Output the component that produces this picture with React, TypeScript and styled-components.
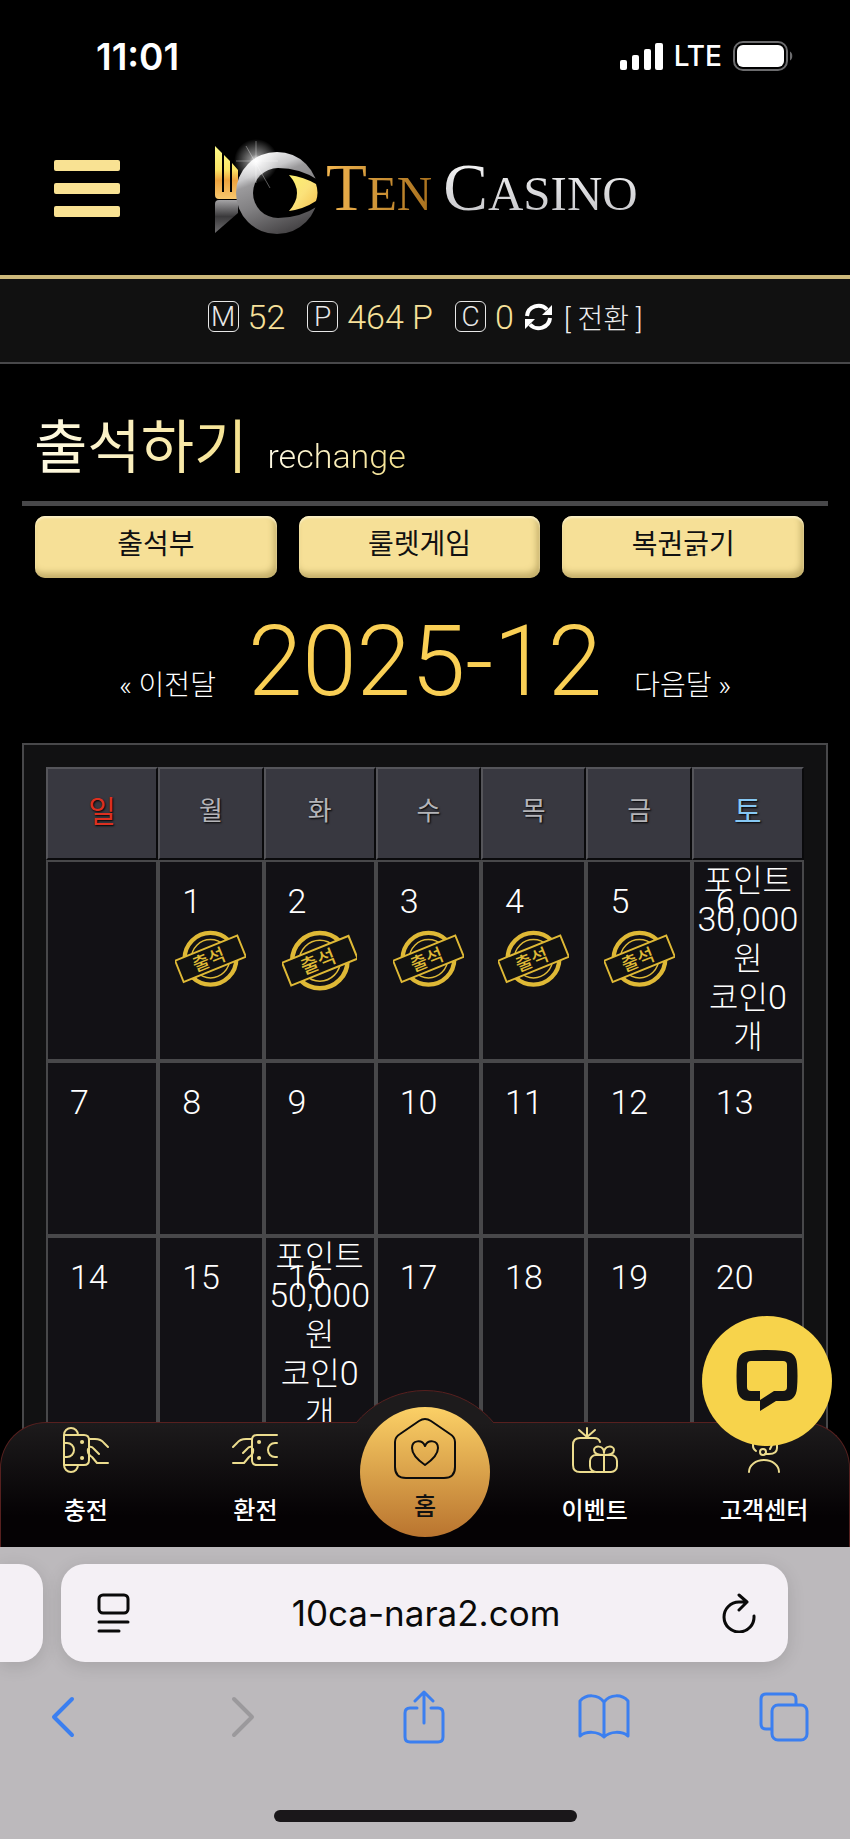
import React from "react";
import styled, { createGlobalStyle, css } from "styled-components";

const GlobalStyle = createGlobalStyle`
  * { box-sizing: border-box; }
  html, body { margin: 0; background: #000; }
  body { font-family: Roboto, "Noto Sans CJK KR", sans-serif; color: #fff; }
  button { font: inherit; color: inherit; border: 0; padding: 0; background: none; cursor: pointer; }
  a { color: inherit; text-decoration: none; }
  svg { display: block; }
`;

const Screen = styled.div`
  display: flex;
  flex-direction: column;
  min-height: 100vh;
  overflow: hidden;
`;

/* ---------- status bar ---------- */

const StatusBar = styled.div`
  display: flex;
  align-items: center;
  justify-content: space-between;
  height: 112px;
  padding: 0 57px 0 96px;
  font-family: Inter, sans-serif;
`;

const Clock = styled.time`
  font-size: 37px;
  font-weight: 600;
`;

const StatusIcons = styled.div`
  display: flex;
  align-items: center;
  gap: 11px;
  font-size: 28px;
  font-weight: 500;
`;

/* ---------- site header ---------- */

const WebView = styled.div`
  position: relative;
  flex: 1;
  display: flex;
  flex-direction: column;
`;

const Header = styled.header`
  display: flex;
  align-items: center;
  height: 167px;
  padding: 0 54px 10px;
  border-bottom: 4px solid #cdb87a;
`;

const MenuButton = styled.button`
  display: flex;
  flex-direction: column;
  gap: 12px;
  width: 66px;
`;

const MenuBar = styled.span`
  height: 11px;
  border-radius: 2px;
  background: #f9e293;
`;

const Logo = styled.a`
  display: flex;
  align-items: center;
  margin-left: 94px;
`;

const LogoText = styled.span`
  display: flex;
  align-items: baseline;
  gap: 11px;
  margin-left: 8px;
  padding-top: 4px;
  font-family: "Liberation Serif", serif;
  font-size: 49px;
  line-height: 72px;
`;

const LogoWord = styled.span<{ $fill: string }>`
  color: transparent;
  background: ${(p) => p.$fill};
  background-clip: text;
`;

const BigLetter = styled.span`
  font-size: 67px;
`;

const Balance = styled.div`
  display: flex;
  align-items: center;
  justify-content: center;
  height: 85px;
  padding-bottom: 8px;
  background: #111;
  border-bottom: 2px solid #48484a;
  font-size: 34px;
  font-weight: 300;
  color: #f7e19a;
`;

const Badge = styled.span`
  display: grid;
  place-items: center;
  width: 31px;
  height: 31px;
  margin-right: 9px;
  border: 1px solid #e8e8e8;
  border-radius: 6px;
  color: #e8e8e8;
  font-size: 28px;
  line-height: 29px;
`;

const Amount = styled.span`
  margin-right: 22px;
`;

const Convert = styled.button`
  display: flex;
  align-items: center;
  gap: 11px;
  margin-left: -12px;
  color: #eee;
  font-size: 28px;
  font-weight: 300;
`;

/* ---------- page body ---------- */

const Main = styled.main`
  padding: 40px 22px 0;
`;

const TitleRow = styled.div`
  display: flex;
  align-items: baseline;
  gap: 20px;
  height: 102px;
  padding: 0 12px;
  border-bottom: 5px solid #48484a;
`;

const goldText = css`
  color: transparent;
  background: linear-gradient(90deg, #fffbe6, #f5e18c);
  background-clip: text;
`;

const Title = styled.h1`
  margin: 0;
  font-size: 58px;
  font-weight: 400;
  line-height: 88px;
  ${goldText}
`;

const Subtitle = styled.span`
  font-size: 34px;
  font-weight: 300;
  ${goldText}
`;

const Tabs = styled.div`
  display: grid;
  grid-template-columns: repeat(3, 1fr);
  gap: 22px;
  padding: 10px 24px 0 13px;
`;

const Tab = styled.button`
  height: 62px;
  padding-bottom: 10px;
  border-radius: 10px;
  background: #f6e097;
  box-shadow: inset 0 2px 2px #fbf0c6, inset -3px -5px 6px rgba(120, 100, 40, 0.4);
  color: #111;
  font-size: 28px;
`;

const MonthNav = styled.nav`
  display: flex;
  align-items: baseline;
  justify-content: center;
  gap: 32px;
  height: 165px;
  font-size: 28px;
  font-weight: 300;
`;

const Month = styled.h2`
  margin: 0;
  color: #f9cf55;
  font-size: 98px;
  font-weight: 300;
  line-height: 168px;
`;

const Panel = styled.section`
  padding: 22px;
  border: 2px solid #48484a;
  background: #111112;
`;

const Calendar = styled.table`
  width: 100%;
  table-layout: fixed;
  border-collapse: separate;
  border-spacing: 0;
`;

type Tone = "sun" | "sat" | "week";
const toneColor: Record<Tone, string> = { sun: "#dc3020", sat: "#86c8f4", week: "#b4b4b8" };

const DayHead = styled.th<{ $tone: Tone; $wide: boolean }>`
  width: ${(p) => (p.$wide ? "14.8%" : "13.9%")};
  height: 93px;
  padding: 0 0 10px;
  border: 2px solid #0a0a0c;
  border-top-color: #55555a;
  border-left-color: #55555a;
  background: #383840;
  color: ${(p) => toneColor[p.$tone]};
  font-size: ${(p) => (p.$tone === "week" ? 26 : 30)}px;
  font-weight: 400;
  text-shadow: 1px 1px 2px #000;
`;

const DayCell = styled.td<{ $tall: boolean }>`
  position: relative;
  height: ${(p) => (p.$tall ? 201 : 175)}px;
  padding: 0;
  border: 2px solid #48484a;
  background: #121115;
  font-size: 32px;
  font-weight: 300;
  line-height: 39px;
  text-align: center;
  vertical-align: top;
`;

const DayNumber = styled.span`
  position: absolute;
  top: 20px;
  left: 22px;
  font-size: 34px;
`;

const Stamp = styled.svg`
  width: 70%;
  margin: 68px auto 0;
`;

const RewardNumber = styled.span`
  font-size: 34px;
  line-height: 34px;
`;

/* ---------- bottom tab bar ---------- */

const TabBar = styled.nav`
  position: absolute;
  inset: auto 0 0;
  display: grid;
  grid-template-columns: repeat(5, 1fr);
  height: 125px;
  border: 1px solid #57201f;
  border-bottom: 0;
  border-radius: 46px 46px 0 0;
  background: linear-gradient(#1d1b1c, #050204 75%);
`;

const Bump = styled.span`
  position: absolute;
  top: -33px;
  left: calc(50% - 90px);
  width: 180px;
  height: 180px;
  border: 1px solid #57201f;
  border-radius: 50%;
  background: #1d1b1c;
  clip-path: inset(0 0 147px);
`;

const TabLink = styled.a`
  display: flex;
  flex-direction: column;
  align-items: center;
  gap: 20px;
  padding-top: 4px;
  font-size: 24px;
  font-weight: 500;
  line-height: 36px;
  color: #fff;
`;

const HomeLink = styled.a`
  position: absolute;
  top: -16px;
  left: calc(50% - 65px);
  display: flex;
  flex-direction: column;
  align-items: center;
  gap: 12px;
  width: 130px;
  height: 130px;
  padding-top: 10px;
  border-radius: 50%;
  background: linear-gradient(#fbd066, #b9742f);
  color: #111;
  font-size: 24px;
  font-weight: 500;
  line-height: 32px;
`;

const ChatButton = styled.button`
  position: absolute;
  right: 18px;
  bottom: 101px;
  display: grid;
  place-items: center;
  width: 130px;
  height: 130px;
  border-radius: 50%;
  background: #f7d34b;
`;

/* ---------- browser chrome ---------- */

const Browser = styled.footer`
  height: 292px;
  padding-top: 17px;
  background: #bcb9bc;
`;

const AddressRow = styled.div`
  display: flex;
  gap: 18px;
  padding-right: 62px;
`;

const NextTab = styled.div`
  width: 43px;
  height: 98px;
  border-radius: 0 24px 24px 0;
  background: #f4f0f5;
  box-shadow: 0 4px 18px rgba(0, 0, 0, 0.12);
`;

const Address = styled.div`
  flex: 1;
  display: flex;
  align-items: center;
  justify-content: space-between;
  height: 98px;
  padding: 0 32px 0 36px;
  border-radius: 24px;
  background: #f4f0f5;
  box-shadow: 0 4px 18px rgba(0, 0, 0, 0.12);
`;

const AddressInput = styled.input`
  flex: 1;
  min-width: 0;
  padding: 0;
  border: 0;
  background: none;
  color: #0a0a0a;
  font-family: Inter, sans-serif;
  font-size: 35px;
  text-align: center;
`;

const Toolbar = styled.div`
  display: flex;
  align-items: center;
  justify-content: space-between;
  height: 110px;
  padding: 0 40px 0 37px;
`;

const ToolButton = styled.button<{ $off?: boolean }>`
  display: grid;
  place-items: center;
  width: 52px;
  height: 54px;
  color: ${(p) => (p.$off ? "#9b999c" : "#3b7ff0")};
`;

const HomeIndicator = styled.div`
  width: 303px;
  height: 12px;
  margin: 38px auto 0;
  border-radius: 6px;
  background: #1a171a;
`;

/* ---------- drawings ---------- */

const Signal = () => (
  <svg width="43" height="27" viewBox="0 0 43 27" fill="#fff">
    <rect x="0" y="17" width="7" height="10" rx="2" />
    <rect x="12" y="12" width="7" height="15" rx="2" />
    <rect x="24" y="6" width="7" height="21" rx="2" />
    <rect x="35" y="0" width="8" height="27" rx="2" />
  </svg>
);

const Battery = () => (
  <svg width="60" height="30" viewBox="0 0 60 30">
    <rect x="1" y="1" width="53" height="28" rx="9" fill="none" stroke="#6c6c6e" strokeWidth="2" />
    <rect x="4" y="4" width="47" height="22" rx="6" fill="#fff" />
    <path d="M57 10.500c3 1.500 3 7.500 0 9z" fill="#6c6c6e" />
  </svg>
);

const LogoMark = () => (
  <svg width="104" height="104" viewBox="0 0 104 104">
    <defs>
      <linearGradient id="gold" x1="0" y1="0" x2="0" y2="1">
        <stop offset="0" stopColor="#fdfb8a" />
        <stop offset=".45" stopColor="#fbe465" />
        <stop offset=".65" stopColor="#eda33e" />
        <stop offset="1" stopColor="#f8c86e" />
      </linearGradient>
      <linearGradient id="silver" x1=".2" y1="0" x2=".6" y2="1">
        <stop offset="0" stopColor="#fff" />
        <stop offset=".25" stopColor="#c9c9cb" />
        <stop offset=".34" stopColor="#9b9a9c" />
        <stop offset=".6" stopColor="#807f81" />
        <stop offset="1" stopColor="#454345" />
      </linearGradient>
      <linearGradient id="tail" x1="0" y1="0" x2="0" y2="1">
        <stop offset="0" stopColor="#a5a4a6" />
        <stop offset=".5" stopColor="#3a393b" />
        <stop offset="1" stopColor="#6d6c6e" />
      </linearGradient>
      <linearGradient id="eye" x1="0" y1="0" x2="1" y2="1">
        <stop offset="0" stopColor="#fdf26d" />
        <stop offset=".5" stopColor="#fbe27a" />
        <stop offset="1" stopColor="#f3c04d" />
      </linearGradient>
      <radialGradient id="flare">
        <stop offset="0" stopColor="#fff" />
        <stop offset=".3" stopColor="#fff" stopOpacity=".5" />
        <stop offset="1" stopColor="#fff" stopOpacity="0" />
      </radialGradient>
    </defs>
    <path d="M1 9l7 7v39h2V18l6 6v31h2V26l6 7v29H5q-4 0-4-4z" fill="url(#gold)" />
    <path d="M1 67q0-4 4-4h19v13L1 96z" fill="url(#tail)" />
    <circle cx="63" cy="56" r="41" fill="url(#silver)" />
    <path d="M64 31Q86 31 104 43V69Q86 81 64 81A25 25 0 0 1 64 31z" fill="#000" />
    <path d="M75 38Q90 40 102 47Q105 56 102 64Q90 72 75 74Q91 56 75 38z" fill="url(#eye)" />
    <circle cx="42" cy="24" r="22" fill="url(#flare)" />
    <path d="M42 4v42M22 24h42M32 9l24 42" stroke="#fff" strokeWidth="1" opacity=".35" />
  </svg>
);

const Refresh = () => (
  <svg width="29" height="28" viewBox="0 0 29 28" fill="none" stroke="#fff" strokeWidth="4">
    <path d="M3 13A11.500 11 0 0 1 23 6.500M26 15A11.500 11 0 0 1 6 21.500" />
    <path d="M28 2v10H18zM1 26V16h10z" fill="#fff" stroke="none" />
  </svg>
);

const AttendStamp = () => (
  <Stamp viewBox="0 0 74 60" fill="none" stroke="#dfb936" role="img" aria-label="출석">
    <circle cx="37" cy="30" r="27" strokeWidth="4.500" />
    <circle cx="37" cy="30" r="20" strokeWidth="1.500" />
    <g transform="rotate(-22 37 30)">
      <rect x="2" y="18" width="70" height="24" fill="#111" strokeWidth="2" />
      <text
        x="35"
        y="37"
        textAnchor="middle"
        fill="#dfb936"
        stroke="none"
        fontSize="19"
        fontWeight="500"
        fontFamily="Noto Sans CJK KR"
      >
        출석
      </text>
    </g>
  </Stamp>
);

const line = { fill: "none", stroke: "#ecdc8e", strokeWidth: 2, strokeLinecap: "round", strokeLinejoin: "round" } as const;

const DepositIcon = () => (
  <svg width="46" height="46" viewBox="0 0 46 46" {...line}>
    <path d="M1 8v30M1 8a7 7 0 0 1 14 0M1 38a7 7 0 0 0 14 0M1 8h20q5 0 5 5v20q0 5-5 5H1M1 16h3a7 7 0 0 1 0 14H1" />
    <path d="M26 12h6q6 0 9 4l4 4M26 20q3-1 5 2l5 5M25 22q-1 5 4 8l5 6h11" />
    <path d="M19 15h.1M19 31h.1" strokeWidth="4" />
  </svg>
);

const WithdrawIcon = () => (
  <svg width="46" height="46" viewBox="0 0 46 46" {...line}>
    <path d="M45 8H25q-5 0-5 5v20q0 5 5 5h20M45 16h-2a7 7 0 0 0 0 14h2" />
    <path d="M20 12h-6q-6 0-9 4l-4 4M20 20q-3-1-5 2l-4 4M21 22q1 5-4 8l-5 6H1" />
    <path d="M27 15h.1M27 31h.1" strokeWidth="4" />
  </svg>
);

const EventIcon = () => (
  <svg width="46" height="46" viewBox="0 0 46 46" {...line}>
    <path d="M28 15q-1-4-6-4H8q-7 0-7 7v20q0 7 7 7h14M15 1v8M7 3l8 7 8-7" />
    <rect x="18" y="28" width="27" height="17" rx="6" />
    <path d="M32 28v17M32 28q-10 0-10-5c0-5 10-5 10 3c0-8 10-8 10-3q0 5-10 5" />
  </svg>
);

const SupportIcon = () => (
  <svg width="46" height="46" viewBox="0 0 46 46" {...line}>
    <path d="M12 16a11 11 0 0 1 24 0v5q0 6-8 6h-4M12 14v5q0 3 3 5M31 18l-2 4" />
    <circle cx="22" cy="25" r="3" />
    <path d="M8 45a15 12 0 0 1 30 0" />
  </svg>
);

const HomeIcon = () => (
  <svg width="62" height="62" viewBox="0 0 62 62" fill="none" stroke="#0c0c0c" strokeWidth="2" strokeLinejoin="round">
    <path d="M1 25q0-5 5-8L25 4q6-4 12 0l19 13q5 3 5 8v25q0 11-11 11H12Q1 61 1 50z" />
    <path d="M31 48Q18 39 18 31c0-8 10-9 13-2c3-7 13-6 13 2q0 8-13 17z" />
  </svg>
);

const ChatIcon = () => (
  <svg width="62" height="62" viewBox="0 0 62 62">
    <path
      fillRule="evenodd"
      d="M14 1Q31-1 48 1Q60 2 61 14q1 12 0 24q-1 13-13 13h-8L24 61V51H14Q2 51 1 38Q0 26 1 14Q2 2 14 1zM15 11q-4 0-4 4v22q0 4 4 4h9v9l14-9h9q4 0 4-4V15q0-4-4-4z"
      fill="#141414"
    />
  </svg>
);

const ReaderIcon = () => (
  <svg width="33" height="40" viewBox="0 0 33 40" fill="none" stroke="#0a0a0a" strokeWidth="3" strokeLinecap="round">
    <rect x="2" y="2" width="29" height="18" rx="4" />
    <path d="M2 29h29M2 38h20" />
  </svg>
);

const ReloadIcon = () => (
  <svg width="34" height="40" viewBox="0 0 34 40" fill="none" stroke="#0a0a0a" strokeWidth="3" strokeLinecap="round" strokeLinejoin="round">
    <path d="M32 23A15 15 0 1 1 17 9h8M17 2l8 7-8 8" />
  </svg>
);

const days: { label: string; tone: Tone; wide: boolean }[] = [
  { label: "일", tone: "sun", wide: true },
  { label: "월", tone: "week", wide: false },
  { label: "화", tone: "week", wide: true },
  { label: "수", tone: "week", wide: false },
  { label: "목", tone: "week", wide: false },
  { label: "금", tone: "week", wide: false },
  { label: "토", tone: "sat", wide: true },
];

const weeks: { tall: boolean; dates: (number | null)[] }[] = [
  { tall: true, dates: [null, 1, 2, 3, 4, 5, 6] },
  { tall: false, dates: [7, 8, 9, 10, 11, 12, 13] },
  { tall: true, dates: [14, 15, 16, 17, 18, 19, 20] },
];

const rewards: Record<number, string> = { 6: "30,000", 16: "50,000" };

const Reward = ({ points }: { points: string }) => (
  <>
    포인트
    <br />
    <RewardNumber>{points}</RewardNumber>
    <br />원<br />
    코인<RewardNumber>0</RewardNumber>
    <br />개
  </>
);

const tool = { fill: "none", stroke: "currentColor", strokeWidth: 3, strokeLinecap: "round", strokeLinejoin: "round" } as const;

export default function App() {
  return (
    <Screen>
      <GlobalStyle />
      <StatusBar>
        <Clock>11:01</Clock>
        <StatusIcons>
          <Signal />
          LTE
          <Battery />
        </StatusIcons>
      </StatusBar>

      <WebView>
        <Header>
          <MenuButton aria-label="메뉴">
            <MenuBar />
            <MenuBar />
            <MenuBar />
          </MenuButton>
          <Logo href="#">
            <LogoMark />
            <LogoText>
              <LogoWord $fill="linear-gradient(90deg, #f3b650, #a8701d)">
                <BigLetter>T</BigLetter>EN
              </LogoWord>
              <LogoWord $fill="linear-gradient(#fff, #b9b9bd)">
                <BigLetter>C</BigLetter>ASINO
              </LogoWord>
            </LogoText>
          </Logo>
        </Header>

        <Balance>
          <Badge>M</Badge>
          <Amount>52</Amount>
          <Badge>P</Badge>
          <Amount>464 P</Amount>
          <Badge>C</Badge>
          <Amount>0</Amount>
          <Convert>
            <Refresh />[ 전환 ]
          </Convert>
        </Balance>

        <Main>
          <TitleRow>
            <Title>출석하기</Title>
            <Subtitle>rechange</Subtitle>
          </TitleRow>
          <Tabs>
            <Tab>출석부</Tab>
            <Tab>룰렛게임</Tab>
            <Tab>복권긁기</Tab>
          </Tabs>
          <MonthNav>
            <a href="#">« 이전달</a>
            <Month>2025-12</Month>
            <a href="#">다음달 »</a>
          </MonthNav>
          <Panel>
            <Calendar>
              <thead>
                <tr>
                  {days.map((d) => (
                    <DayHead key={d.label} $tone={d.tone} $wide={d.wide} scope="col">
                      {d.label}
                    </DayHead>
                  ))}
                </tr>
              </thead>
              <tbody>
                {weeks.map((week, w) => (
                  <tr key={w}>
                    {week.dates.map((date, i) => (
                      <DayCell key={i} $tall={week.tall}>
                        {date && <DayNumber>{date}</DayNumber>}
                        {date && date < 6 && <AttendStamp />}
                        {date && rewards[date] && <Reward points={rewards[date]} />}
                      </DayCell>
                    ))}
                  </tr>
                ))}
              </tbody>
            </Calendar>
          </Panel>
        </Main>

        <TabBar>
          <Bump />
          <TabLink href="#">
            <DepositIcon />
            충전
          </TabLink>
          <TabLink href="#">
            <WithdrawIcon />
            환전
          </TabLink>
          <span />
          <TabLink href="#">
            <EventIcon />
            이벤트
          </TabLink>
          <TabLink href="#">
            <SupportIcon />
            고객센터
          </TabLink>
          <HomeLink href="#">
            <HomeIcon />홈
          </HomeLink>
        </TabBar>
        <ChatButton aria-label="채팅">
          <ChatIcon />
        </ChatButton>
      </WebView>

      <Browser>
        <AddressRow>
          <NextTab />
          <Address>
            <button aria-label="페이지 메뉴">
              <ReaderIcon />
            </button>
            <AddressInput aria-label="주소" defaultValue="10ca-nara2.com" />
            <button aria-label="새로고침">
              <ReloadIcon />
            </button>
          </Address>
        </AddressRow>
        <Toolbar>
          <ToolButton aria-label="뒤로">
            <svg width="24" height="42" viewBox="0 0 24 42" {...tool} strokeWidth="4">
              <path d="M21 3L3 21l18 18" />
            </svg>
          </ToolButton>
          <ToolButton aria-label="앞으로" $off>
            <svg width="24" height="42" viewBox="0 0 24 42" {...tool} strokeWidth="4">
              <path d="M3 3l18 18L3 39" />
            </svg>
          </ToolButton>
          <ToolButton aria-label="공유">
            <svg width="42" height="54" viewBox="0 0 42 54" {...tool}>
              <path d="M14 18H7q-5 0-5 5v24q0 5 5 5h28q5 0 5-5V23q0-5-5-5h-7M21 33V2M12 11l9-9 9 9" />
            </svg>
          </ToolButton>
          <ToolButton aria-label="책갈피">
            <svg width="52" height="46" viewBox="0 0 52 46" {...tool}>
              <path d="M26 8C20 0 8 0 2 7v35c6-5 18-5 24 1c6-6 18-6 24-1V7C44 0 32 0 26 8zv34" />
            </svg>
          </ToolButton>
          <ToolButton aria-label="탭">
            <svg width="50" height="50" viewBox="0 0 50 50" {...tool}>
              <path d="M12 37H7q-5 0-5-5V7q0-5 5-5h25q5 0 5 5v5" />
              <rect x="13" y="13" width="35" height="35" rx="6" />
            </svg>
          </ToolButton>
        </Toolbar>
        <HomeIndicator />
      </Browser>
    </Screen>
  );
}
